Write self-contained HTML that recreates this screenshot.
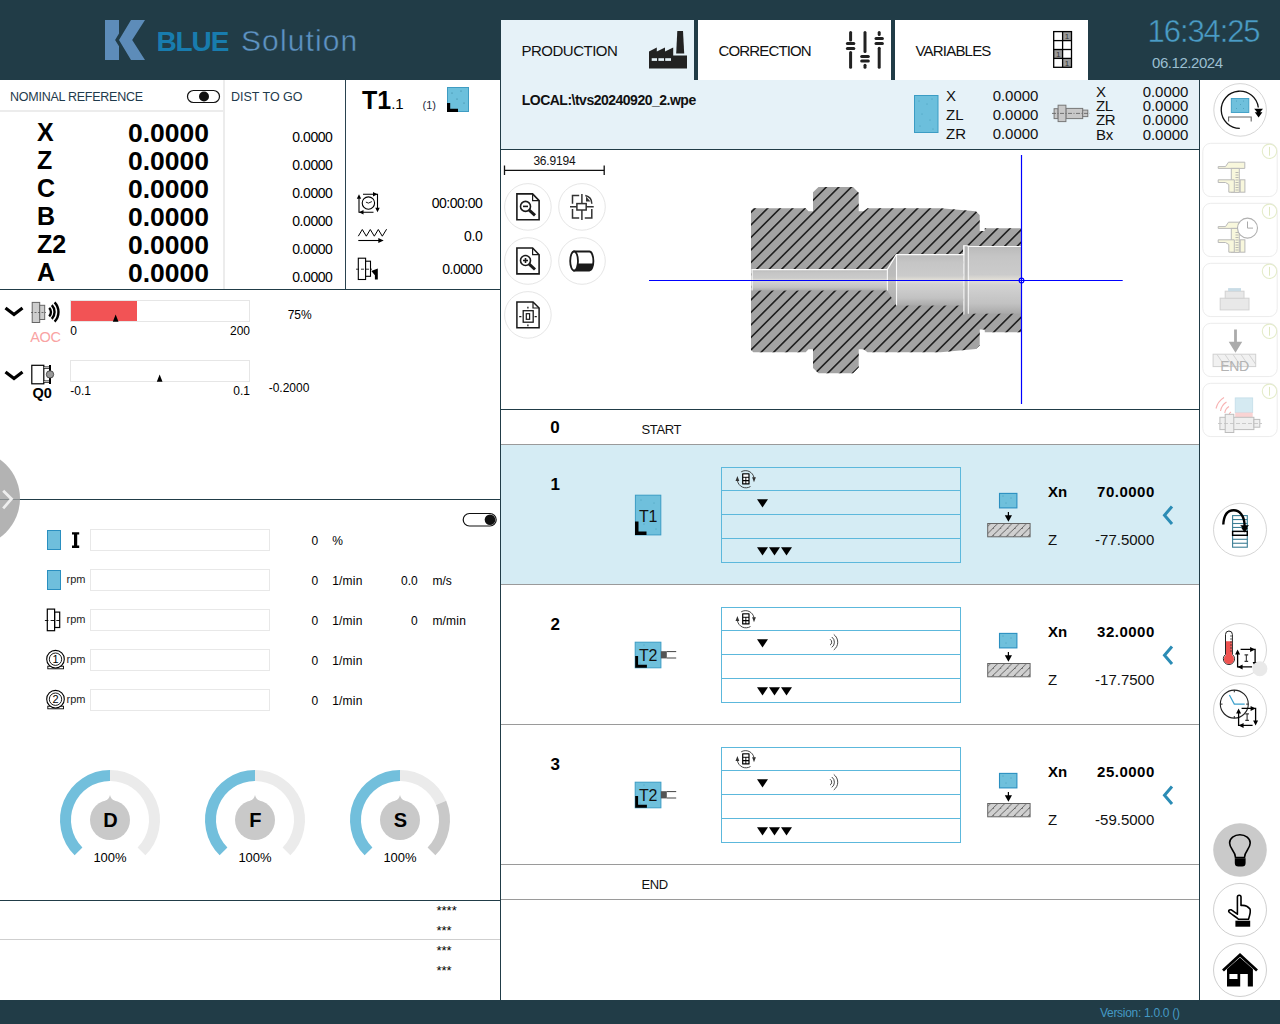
<!DOCTYPE html>
<html><head><meta charset="utf-8">
<style>
html,body{margin:0;padding:0}
body{width:1280px;height:1024px;position:relative;overflow:hidden;background:#fff;font-family:"Liberation Sans",sans-serif;color:#000}
.a{position:absolute}
.t{position:absolute;line-height:1;white-space:nowrap}
.b{font-weight:bold}
svg{position:absolute;overflow:visible}
</style></head><body>
<div class="a" style="left:0px;top:0px;width:1280px;height:80px;background:#213c47;"></div>
<svg style="left:0px;top:0px" width="160" height="80" viewBox="0 0 160 80"><path d="M105 20H119V33.5L115.1 40L119 46.3V60H105Z M131 20H145L132.2 40L145 60H131L119 40Z" fill="#5d8cb9"/></svg>
<div class="t b" style="top:28.00px;font-size:28px;left:156.50px;color:#187cae;letter-spacing:-1.1px;">BLUE</div>
<div class="t" style="top:26.00px;font-size:30px;left:241.00px;color:#5e93c4;letter-spacing:1.1px;-webkit-text-stroke:0.45px #213c47">Solution</div>
<div class="a" style="left:501px;top:20px;width:193px;height:60px;background:#e6f2f8;"></div>
<div class="a" style="left:698px;top:20px;width:193px;height:60px;background:#fff;"></div>
<div class="a" style="left:895px;top:20px;width:193px;height:60px;background:#fff;"></div>
<div class="t" style="top:43.00px;font-size:15px;left:521.50px;color:#111;letter-spacing:-0.5px;">PRODUCTION</div>
<div class="t" style="top:43.00px;font-size:15px;left:718.50px;color:#111;letter-spacing:-0.85px;">CORRECTION</div>
<div class="t" style="top:43.00px;font-size:15px;left:915.50px;color:#111;letter-spacing:-0.8px;">VARIABLES</div>
<svg style="left:640px;top:25px" width="60" height="50" viewBox="0 0 60 50"><g transform="translate(-640,-25)" fill="#222"><path d="M649 68.5V51.4L656.8 47.5V51.4L665 47.5V51.4L673.2 47.5V55.5H687V68.5Z"/><path d="M677.3 31H683L684.2 53.6H676.2Z"/><rect x="651.7" y="58.2" width="5.3" height="2.7" fill="#e6f2f8"/><rect x="658.4" y="58.2" width="5.6" height="2.7" fill="#e6f2f8"/><rect x="665.2" y="58.2" width="5.8" height="2.7" fill="#e6f2f8"/></g></svg>
<svg style="left:835px;top:25px" width="60" height="50" viewBox="0 0 60 50"><g transform="translate(-835,-25)" stroke="#222" stroke-width="3" stroke-linecap="round" fill="none"><line x1="850.6" y1="32.6" x2="850.6" y2="40"/><line x1="850.6" y1="52.6" x2="850.6" y2="67.2"/><line x1="847.4" y1="43.6" x2="853.8000000000001" y2="43.6"/><line x1="847.4" y1="48.5" x2="853.8000000000001" y2="48.5"/><line x1="865" y1="32.6" x2="865" y2="51.5"/><line x1="865" y1="65.2" x2="865" y2="67.2"/><line x1="861.7" y1="56.4" x2="868.3" y2="56.4"/><line x1="861.7" y1="61.1" x2="868.3" y2="61.1"/><line x1="879.2" y1="32.6" x2="879.2" y2="34.6"/><line x1="879.2" y1="48.2" x2="879.2" y2="67.2"/><line x1="876.0" y1="38.6" x2="882.4000000000001" y2="38.6"/><line x1="876.0" y1="43.4" x2="882.4000000000001" y2="43.4"/></g></svg>
<svg style="left:1040px;top:25px" width="40" height="50" viewBox="0 0 40 50"><g transform="translate(-1040,-25)"><rect x="1062.6" y="31.6" width="8.9" height="8.9" fill="#9a9a9a"/><text x="1067.05" y="39.2" font-size="8" text-anchor="middle" fill="#333" font-family="Liberation Sans">1</text><rect x="1053.7" y="49.5" width="8.9" height="8.9" fill="#9a9a9a"/><text x="1058.15" y="57.1" font-size="8" text-anchor="middle" fill="#333" font-family="Liberation Sans">1</text><rect x="1062.6" y="58.4" width="8.9" height="8.9" fill="#9a9a9a"/><text x="1067.05" y="66.0" font-size="8" text-anchor="middle" fill="#333" font-family="Liberation Sans">1</text><g stroke="#000" stroke-width="1.3" fill="none"><rect x="1053.7" y="31.6" width="17.799999999999955" height="35.699999999999996"/><line x1="1062.6" y1="31.6" x2="1062.6" y2="67.3"/><line x1="1053.7" y1="40.6" x2="1071.5" y2="40.6"/><line x1="1053.7" y1="49.5" x2="1071.5" y2="49.5"/><line x1="1053.7" y1="58.4" x2="1071.5" y2="58.4"/></g></g></svg>
<div class="t" style="top:16.00px;font-size:31px;left:1147.60px;color:#4a9cc6;letter-spacing:-1.1px;-webkit-text-stroke:0.45px #213c47">16:34:25</div>
<div class="t" style="top:55.00px;font-size:15px;left:1152.00px;color:#9bbfd1;letter-spacing:-0.45px;">06.12.2024</div>
<div class="a" style="left:0px;top:1000px;width:1280px;height:24px;background:#213c47;"></div>
<div class="t" style="top:1007.00px;font-size:12px;left:1100.00px;color:#4599c4;letter-spacing:-0.3px;">Version: 1.0.0 ()</div>
<div class="t" style="top:91.00px;font-size:12.5px;left:10.00px;color:#1e3a4c;letter-spacing:-0.25px;">NOMINAL REFERENCE</div>
<svg style="left:186px;top:89px" width="36" height="16" viewBox="0 0 36 16"><rect x="1.5" y="1.5" width="32" height="12" rx="6" fill="#fff" stroke="#111" stroke-width="1.2"/><circle cx="18" cy="7.5" r="5" fill="#111"/></svg>
<div class="a" style="left:0px;top:110px;width:223px;height:2px;background:#ececec;"></div>
<div class="a" style="left:223px;top:80px;width:2px;height:209px;background:#ececec;"></div>
<div class="t" style="top:91.00px;font-size:12.5px;left:231.00px;color:#1e3a4c;">DIST TO GO</div>
<div class="a" style="left:345px;top:80px;width:1px;height:209px;background:#2a4350;"></div>
<div class="a" style="left:0px;top:289px;width:500px;height:1px;background:#213c47;"></div>
<div class="t b" style="top:120.00px;font-size:25px;left:37.00px;">X</div>
<div class="t b" style="top:121.00px;font-size:25px;left:9.20px;width:200px;text-align:right;transform:scaleX(1.06);transform-origin:100% 50%">0.0000</div>
<div class="t" style="top:130.00px;font-size:14px;left:132.40px;width:200px;text-align:right;letter-spacing:-0.45px;">0.0000</div>
<div class="t b" style="top:148.00px;font-size:25px;left:37.00px;">Z</div>
<div class="t b" style="top:149.00px;font-size:25px;left:9.20px;width:200px;text-align:right;transform:scaleX(1.06);transform-origin:100% 50%">0.0000</div>
<div class="t" style="top:158.00px;font-size:14px;left:132.40px;width:200px;text-align:right;letter-spacing:-0.45px;">0.0000</div>
<div class="t b" style="top:176.00px;font-size:25px;left:37.00px;">C</div>
<div class="t b" style="top:177.00px;font-size:25px;left:9.20px;width:200px;text-align:right;transform:scaleX(1.06);transform-origin:100% 50%">0.0000</div>
<div class="t" style="top:186.00px;font-size:14px;left:132.40px;width:200px;text-align:right;letter-spacing:-0.45px;">0.0000</div>
<div class="t b" style="top:204.00px;font-size:25px;left:37.00px;">B</div>
<div class="t b" style="top:205.00px;font-size:25px;left:9.20px;width:200px;text-align:right;transform:scaleX(1.06);transform-origin:100% 50%">0.0000</div>
<div class="t" style="top:214.00px;font-size:14px;left:132.40px;width:200px;text-align:right;letter-spacing:-0.45px;">0.0000</div>
<div class="t b" style="top:232.00px;font-size:25px;left:37.00px;">Z2</div>
<div class="t b" style="top:233.00px;font-size:25px;left:9.20px;width:200px;text-align:right;transform:scaleX(1.06);transform-origin:100% 50%">0.0000</div>
<div class="t" style="top:242.00px;font-size:14px;left:132.40px;width:200px;text-align:right;letter-spacing:-0.45px;">0.0000</div>
<div class="t b" style="top:260.00px;font-size:25px;left:37.00px;">A</div>
<div class="t b" style="top:261.00px;font-size:25px;left:9.20px;width:200px;text-align:right;transform:scaleX(1.06);transform-origin:100% 50%">0.0000</div>
<div class="t" style="top:270.00px;font-size:14px;left:132.40px;width:200px;text-align:right;letter-spacing:-0.45px;">0.0000</div>
<div class="t b" style="top:88.00px;font-size:25px;left:362.00px;">T1<span style="font-size:15px;font-weight:normal">.1</span></div>
<div class="t" style="top:100.00px;font-size:11px;left:422.50px;color:#1e2a40;">(1)</div>
<svg style="left:447px;top:87px" width="22" height="25" viewBox="0 0 22 25"><rect x="0.5" y="0.5" width="21" height="24" fill="#6cc0dc" stroke="#3f9cc2"/><g fill="#2a6f8a"><circle cx="5" cy="6" r=".5"/><circle cx="14" cy="4" r=".5"/><circle cx="10" cy="12" r=".5"/><circle cx="17" cy="16" r=".5"/></g><path d="M0 16H3.2V21.8H11V25H0Z" fill="#000"/></svg>
<svg style="left:356px;top:192px" width="24" height="24" viewBox="0 0 24 24"><path d="M3 6.3V20.3H17.5M7 2.3H21.5V16.3" fill="none" stroke="#000" stroke-width="1.1"/><path d="M0.7999999999999998 6.8L3 2.3L5.2 6.8Z M17.0 0.09999999999999964L21.5 2.3L17.0 4.5Z M23.7 15.8L21.5 20.3L19.3 15.8Z M7.5 22.5L3 20.3L7.5 18.1Z" fill="#000"/><circle cx="12.4" cy="11.1" r="6.2" fill="#fff" stroke="#000" stroke-width="1.1"/><path d="M12.4 11.1L15.9 9.6M12.4 11.1L9.9 10.1" stroke="#000" stroke-width="0.9"/></svg>
<div class="t" style="top:196.00px;font-size:14px;left:282.30px;width:200px;text-align:right;letter-spacing:-0.5px;">00:00:00</div>
<svg style="left:357px;top:228px" width="32" height="16" viewBox="0 0 32 16"><path d="M1.3 8.2L5.3 1.5L9.3 8.2L13.3 1.5L17.3 8.2L21.3 1.5L25.3 8.2L29.6 1.2" fill="none" stroke="#000" stroke-width="1"/><path d="M1.3 12.5H23" stroke="#000" stroke-width="1.1"/><path d="M26.7 12.5L21.3 10V15Z" fill="#000"/></svg>
<div class="t" style="top:229.00px;font-size:14px;left:282.30px;width:200px;text-align:right;letter-spacing:-0.4px;">0.0</div>
<svg style="left:355px;top:257px" width="26" height="25" viewBox="0 0 26 25"><rect x="3.3" y="1.2" width="7.3" height="21.3" fill="#fff" stroke="#000" stroke-width="1.1"/><rect x="10.6" y="4.2" width="4.9" height="15.1" fill="#fff" stroke="#000" stroke-width="1.1"/><path d="M1 12.2H17" stroke="#000" stroke-width="0.8" stroke-dasharray="3 2"/><path d="M16.3 14L22.8 11.5V22.5H19.9V18.3Z" fill="#000"/></svg>
<div class="t" style="top:262.00px;font-size:14px;left:282.30px;width:200px;text-align:right;letter-spacing:-0.45px;">0.0000</div>
<svg style="left:4px;top:306px" width="22" height="12" viewBox="0 0 22 12"><path d="M1.5 2L10 8.5L18.5 2" fill="none" stroke="#000" stroke-width="3.2" stroke-linejoin="miter"/></svg>
<svg style="left:30px;top:300px" width="34" height="25" viewBox="0 0 34 25"><rect x="2.2" y="2.4" width="7.5" height="20.1" fill="#cdcdcd" stroke="#666" stroke-width="1"/><rect x="9.7" y="5.3" width="5" height="14.2" fill="#cdcdcd" stroke="#666" stroke-width="1"/><path d="M1 12.5H16" stroke="#555" stroke-width="0.8" stroke-dasharray="2 1.5"/><g fill="none" stroke="#000" stroke-width="2.4"><path d="M19.2 7.8A6 6 0 0 1 19.2 16.3"/><path d="M21.8 5.1A10 10 0 0 1 21.8 18.9"/><path d="M24.6 2.3A14 14 0 0 1 24.6 21.6"/></g></svg>
<div class="t" style="top:330.00px;font-size:14.5px;left:30.30px;color:#f9a3a3;letter-spacing:-0.4px;">AOC</div>
<div class="a" style="left:70px;top:300px;width:180px;height:22px;background:#fff;box-sizing:border-box;border:1px solid #e6e6e6"></div>
<div class="a" style="left:71px;top:301px;width:65.5px;height:20px;background:#f25355;"></div>
<svg style="left:112px;top:314px" width="8" height="8" viewBox="0 0 8 8"><path d="M0.8 7.7L3.65 0.5L6.5 7.7Z" fill="#000"/></svg>
<div class="t" style="top:325.00px;font-size:12px;left:70.30px;">0</div>
<div class="t" style="top:325.00px;font-size:12px;left:50.00px;width:200px;text-align:right;">200</div>
<div class="t" style="top:309.00px;font-size:12px;left:287.70px;">75%</div>
<svg style="left:4px;top:370px" width="22" height="12" viewBox="0 0 22 12"><path d="M1.5 2L10 8.5L18.5 2" fill="none" stroke="#000" stroke-width="3.2" stroke-linejoin="miter"/></svg>
<svg style="left:30px;top:363px" width="26" height="22" viewBox="0 0 26 22"><rect x="1.8" y="2.3" width="12" height="18.5" fill="#fff" stroke="#000" stroke-width="1.2"/><path d="M13.8 4.6H20M13.8 18.6H20" stroke="#000" stroke-width="2.4"/><path d="M13.8 4.6H20M13.8 18.6H20" stroke="#fff" stroke-width="0.8"/><path d="M20 2V21" stroke="#000" stroke-width="2"/><circle cx="20" cy="11.4" r="3.7" fill="#999" stroke="#333" stroke-width="0.8"/></svg>
<div class="t b" style="top:386.00px;font-size:14.5px;left:32.50px;">Q0</div>
<div class="a" style="left:70px;top:360px;width:180px;height:22px;background:#fff;box-sizing:border-box;border:1px solid #e6e6e6"></div>
<svg style="left:156px;top:374px" width="8" height="8" viewBox="0 0 8 8"><path d="M0.8 7.7L3.65 0.5L6.5 7.7Z" fill="#000"/></svg>
<div class="t" style="top:385.00px;font-size:12px;left:70.30px;">-0.1</div>
<div class="t" style="top:385.00px;font-size:12px;left:50.00px;width:200px;text-align:right;">0.1</div>
<div class="t" style="top:382.00px;font-size:12px;left:268.70px;">-0.2000</div>
<div class="a" style="left:0px;top:499px;width:500px;height:1px;background:#213c47;"></div>
<svg style="left:0px;top:440px" width="40" height="120" viewBox="0 0 40 120"><circle cx="-28" cy="58.5" r="48" fill="#a0a0a0" fill-opacity="0.8"/><path d="M3.2 50.7L11.5 58.9L3.2 68.4" fill="none" stroke="#eee" stroke-width="2.8"/></svg>
<svg style="left:462px;top:512px" width="36" height="16" viewBox="0 0 36 16"><rect x="1.2" y="1.5" width="33" height="12.5" rx="6.2" fill="#fff" stroke="#111" stroke-width="1.2"/><circle cx="28" cy="7.7" r="5.3" fill="#111"/></svg>
<div class="a" style="left:90px;top:529px;width:180px;height:22px;background:#fff;box-sizing:border-box;border:1px solid #e8e8e8"></div>
<div class="t" style="top:535.00px;font-size:12px;left:118.10px;width:200px;text-align:right;">0</div>
<div class="a" style="left:90px;top:569px;width:180px;height:22px;background:#fff;box-sizing:border-box;border:1px solid #e8e8e8"></div>
<div class="t" style="top:575.00px;font-size:12px;left:118.10px;width:200px;text-align:right;">0</div>
<div class="a" style="left:90px;top:609px;width:180px;height:22px;background:#fff;box-sizing:border-box;border:1px solid #e8e8e8"></div>
<div class="t" style="top:615.00px;font-size:12px;left:118.10px;width:200px;text-align:right;">0</div>
<div class="a" style="left:90px;top:649px;width:180px;height:22px;background:#fff;box-sizing:border-box;border:1px solid #e8e8e8"></div>
<div class="t" style="top:655.00px;font-size:12px;left:118.10px;width:200px;text-align:right;">0</div>
<div class="a" style="left:90px;top:689px;width:180px;height:22px;background:#fff;box-sizing:border-box;border:1px solid #e8e8e8"></div>
<div class="t" style="top:695.00px;font-size:12px;left:118.10px;width:200px;text-align:right;">0</div>
<svg style="left:46px;top:529px" width="16" height="22" viewBox="0 0 16 22"><rect x="1.5" y="1.5" width="13" height="19" fill="#6fbfdc" stroke="#2a8fc0" stroke-width="1"/></svg>
<svg style="left:70px;top:531px" width="12" height="19" viewBox="0 0 12 19"><path d="M2 1.2H9.2V3.6H7.2V14.6H9.2V17H2V14.6H4V3.6H2Z" fill="#000"/></svg>
<svg style="left:46px;top:569px" width="16" height="22" viewBox="0 0 16 22"><rect x="1.5" y="1.5" width="13" height="19" fill="#6fbfdc" stroke="#2a8fc0" stroke-width="1"/></svg>
<div class="t" style="top:574.00px;font-size:11px;left:66.60px;color:#222;">rpm</div>
<svg style="left:44px;top:608px" width="20" height="24" viewBox="0 0 20 24"><rect x="3.3" y="1.1" width="7.3" height="21.6" fill="none" stroke="#000" stroke-width="1.2"/><rect x="10.6" y="4.1" width="5.1" height="15.4" fill="none" stroke="#000" stroke-width="1.2"/><path d="M0.9 12.5H17.7" stroke="#000" stroke-width="0.9" stroke-dasharray="3.5 2.2"/></svg>
<div class="t" style="top:614.00px;font-size:11px;left:66.60px;color:#222;">rpm</div>
<svg style="left:44px;top:647px" width="24" height="24" viewBox="0 0 24 24"><g transform="translate(-44,-647)"><rect x="47.8" y="666.2" width="15.7" height="2.6" fill="#fff" stroke="#000" stroke-width="0.9"/><circle cx="55.5" cy="659.2" r="8.8" fill="#fff" stroke="#000" stroke-width="1.1"/><circle cx="55.5" cy="659.2" r="6.2" fill="#fff" stroke="#000" stroke-width="0.9"/><text x="55.5" y="663.2" font-size="11" text-anchor="middle" font-family="Liberation Sans" fill="#000">1</text></g></svg>
<div class="t" style="top:654.00px;font-size:11px;left:66.60px;color:#222;">rpm</div>
<svg style="left:44px;top:687px" width="24" height="24" viewBox="0 0 24 24"><g transform="translate(-44,-687)"><rect x="47.8" y="706.2" width="15.7" height="2.6" fill="#fff" stroke="#000" stroke-width="0.9"/><circle cx="55.5" cy="699.2" r="8.8" fill="#fff" stroke="#000" stroke-width="1.1"/><circle cx="55.5" cy="699.2" r="6.2" fill="#fff" stroke="#000" stroke-width="0.9"/><text x="55.5" y="703.2" font-size="11" text-anchor="middle" font-family="Liberation Sans" fill="#000">2</text></g></svg>
<div class="t" style="top:694.00px;font-size:11px;left:66.60px;color:#222;">rpm</div>
<div class="t" style="top:535.00px;font-size:12px;left:332.20px;">%</div>
<div class="t" style="top:575.00px;font-size:12px;left:332.20px;letter-spacing:0.2px;">1/min</div>
<div class="t" style="top:615.00px;font-size:12px;left:332.20px;letter-spacing:0.2px;">1/min</div>
<div class="t" style="top:655.00px;font-size:12px;left:332.20px;letter-spacing:0.2px;">1/min</div>
<div class="t" style="top:695.00px;font-size:12px;left:332.20px;letter-spacing:0.2px;">1/min</div>
<div class="t" style="top:575.00px;font-size:12px;left:217.80px;width:200px;text-align:right;">0.0</div>
<div class="t" style="top:575.00px;font-size:12px;left:432.40px;">m/s</div>
<div class="t" style="top:615.00px;font-size:12px;left:217.80px;width:200px;text-align:right;">0</div>
<div class="t" style="top:615.00px;font-size:12px;left:432.40px;letter-spacing:0.2px;">m/min</div>
<svg style="left:0;top:0" width="500" height="1000" viewBox="0 0 500 1000"><path d="M78.53 851.47A44.5 44.5 0 0 1 110.00 775.50" fill="none" stroke="#72bfdc" stroke-width="11"/><path d="M110.00 775.50A44.5 44.5 0 0 1 141.47 851.47" fill="none" stroke="#ebebeb" stroke-width="11"/><circle cx="110" cy="820" r="20" fill="#c9c9c9"/><path d="M110 795Q111 799.5 115 801H105Q109 799.5 110 795Z" fill="#c9c9c9"/></svg>
<div class="t b" style="top:810.00px;font-size:20px;left:90.40px;width:40px;text-align:center;">D</div>
<div class="t" style="top:851.00px;font-size:13px;left:80.00px;width:60px;text-align:center;">100%</div>
<svg style="left:0;top:0" width="500" height="1000" viewBox="0 0 500 1000"><path d="M223.53 851.47A44.5 44.5 0 0 1 255.00 775.50" fill="none" stroke="#72bfdc" stroke-width="11"/><path d="M255.00 775.50A44.5 44.5 0 0 1 286.47 851.47" fill="none" stroke="#ebebeb" stroke-width="11"/><circle cx="255" cy="820" r="20" fill="#c9c9c9"/><path d="M255 795Q256 799.5 260 801H250Q254 799.5 255 795Z" fill="#c9c9c9"/></svg>
<div class="t b" style="top:810.00px;font-size:20px;left:235.40px;width:40px;text-align:center;">F</div>
<div class="t" style="top:851.00px;font-size:13px;left:225.00px;width:60px;text-align:center;">100%</div>
<svg style="left:0;top:0" width="500" height="1000" viewBox="0 0 500 1000"><path d="M368.53 851.47A44.5 44.5 0 0 1 400.00 775.50" fill="none" stroke="#72bfdc" stroke-width="11"/><path d="M400.00 775.50A44.5 44.5 0 0 1 441.11 802.97" fill="none" stroke="#ebebeb" stroke-width="11"/><path d="M441.11 802.97A44.5 44.5 0 0 1 431.47 851.47" fill="none" stroke="#c9c9c9" stroke-width="11"/><circle cx="400" cy="820" r="20" fill="#c9c9c9"/><path d="M400 795Q401 799.5 405 801H395Q399 799.5 400 795Z" fill="#c9c9c9"/></svg>
<div class="t b" style="top:810.00px;font-size:20px;left:380.40px;width:40px;text-align:center;">S</div>
<div class="t" style="top:851.00px;font-size:13px;left:370.00px;width:60px;text-align:center;">100%</div>
<div class="a" style="left:0px;top:900px;width:500px;height:1px;background:#213c47;"></div>
<div class="a" style="left:0px;top:939px;width:500px;height:1px;background:#cfcfcf;"></div>
<div class="t" style="top:904.00px;font-size:13px;left:436.50px;">****</div>
<div class="t" style="top:924.00px;font-size:13px;left:436.50px;">***</div>
<div class="t" style="top:944.00px;font-size:13px;left:436.50px;">***</div>
<div class="t" style="top:964.00px;font-size:13px;left:436.50px;">***</div>
<div class="a" style="left:501px;top:80px;width:698px;height:69px;background:#e6f2f8;"></div>
<div class="a" style="left:500px;top:149px;width:699px;height:1px;background:#213c47;"></div>
<div class="t b" style="top:93.00px;font-size:14px;left:521.70px;color:#111;letter-spacing:-0.5px;">LOCAL:\tvs20240920_2.wpe</div>
<svg style="left:913px;top:94px" width="27" height="40" viewBox="0 0 27 40"><rect x="1.5" y="1.5" width="23.5" height="37" fill="#6cbfdc" stroke="#3b9cc4" stroke-width="1"/><g fill="#2a7f9f"><circle cx="6" cy="7" r=".45"/><circle cx="14" cy="10" r=".45"/><circle cx="19" cy="5" r=".45"/><circle cx="9" cy="20" r=".45"/><circle cx="17" cy="26" r=".45"/><circle cx="7" cy="32" r=".45"/><circle cx="20" cy="35" r=".45"/></g></svg>
<div class="t" style="top:88.00px;font-size:15px;left:946.00px;color:#111;">X</div>
<div class="t" style="top:88.00px;font-size:15px;left:838.30px;width:200px;text-align:right;color:#111;letter-spacing:-0.05px;">0.0000</div>
<div class="t" style="top:107.00px;font-size:15px;left:946.00px;color:#111;">ZL</div>
<div class="t" style="top:107.00px;font-size:15px;left:838.30px;width:200px;text-align:right;color:#111;letter-spacing:-0.05px;">0.0000</div>
<div class="t" style="top:126.00px;font-size:15px;left:946.00px;color:#111;">ZR</div>
<div class="t" style="top:126.00px;font-size:15px;left:838.30px;width:200px;text-align:right;color:#111;letter-spacing:-0.05px;">0.0000</div>
<svg style="left:1050px;top:103px" width="42" height="21" viewBox="0 0 42 21"><g transform="translate(-1050,-103)" fill="#c8c8c8" stroke="#777" stroke-width="1"><rect x="1054.1" y="108.7" width="4" height="9.9"/><rect x="1065.9" y="108.4" width="16.8" height="10.2"/><rect x="1082.7" y="110.1" width="5.1" height="6.5"/><rect x="1058.1" y="105.2" width="7.8" height="16.4"/><path d="M1052 113.4H1089.8" fill="none" stroke="#666" stroke-width="0.9" stroke-dasharray="4 1.5 1 1.5"/></g></svg>
<div class="t" style="top:84.00px;font-size:15px;left:1096.00px;color:#111;letter-spacing:-0.3px;">X</div>
<div class="t" style="top:84.00px;font-size:15px;left:988.30px;width:200px;text-align:right;color:#111;letter-spacing:-0.05px;">0.0000</div>
<div class="t" style="top:98.00px;font-size:15px;left:1096.00px;color:#111;letter-spacing:-0.3px;">ZL</div>
<div class="t" style="top:98.00px;font-size:15px;left:988.30px;width:200px;text-align:right;color:#111;letter-spacing:-0.05px;">0.0000</div>
<div class="t" style="top:112.00px;font-size:15px;left:1096.00px;color:#111;letter-spacing:-0.3px;">ZR</div>
<div class="t" style="top:112.00px;font-size:15px;left:988.30px;width:200px;text-align:right;color:#111;letter-spacing:-0.05px;">0.0000</div>
<div class="t" style="top:127.00px;font-size:15px;left:1096.00px;color:#111;letter-spacing:-0.3px;">Bx</div>
<div class="t" style="top:127.00px;font-size:15px;left:988.30px;width:200px;text-align:right;color:#111;letter-spacing:-0.05px;">0.0000</div>
<div class="t" style="top:155.00px;font-size:12px;left:533.40px;color:#111;letter-spacing:-0.2px;">36.9194</div>
<svg style="left:500px;top:160px" width="110" height="20" viewBox="0 0 110 20"><g transform="translate(-500,-160)" stroke="#111" stroke-width="1.3"><path d="M504.5 170.3H604.2"/><path d="M504.5 165.5V175M604.2 165.5V175"/></g></svg>
<svg style="left:0;top:0" width="1280" height="1024" viewBox="0 0 1280 1024"><circle cx="527.9" cy="206.9" r="23.3" fill="#fff" stroke="#e6e6e6" stroke-width="1"/><circle cx="582" cy="206.9" r="23.3" fill="#fff" stroke="#e6e6e6" stroke-width="1"/><circle cx="527.9" cy="261" r="23.3" fill="#fff" stroke="#e6e6e6" stroke-width="1"/><circle cx="582" cy="261" r="23.3" fill="#fff" stroke="#e6e6e6" stroke-width="1"/><circle cx="527.9" cy="314.9" r="23.3" fill="#fff" stroke="#e6e6e6" stroke-width="1"/><g stroke="#1a1a1a" stroke-width="1.6" fill="none"><path d="M516.9 193.9H532.6L539.1 200.6V219.8H516.9Z"/><path d="M532.6 193.9V200.6H539.1" stroke-width="1.2"/><circle cx="525.5" cy="206.4" r="5"/><path d="M529.2 210.1L535 215.4" stroke-width="3"/><path d="M523 206.4H528"/><path d="M516.9 248.0H532.6L539.1 254.7V273.90000000000003H516.9Z"/><path d="M532.6 248.0V254.7H539.1" stroke-width="1.2"/><circle cx="525.5" cy="260.5" r="5"/><path d="M529.2 264.2L535 269.5" stroke-width="3"/><path d="M523 260.5H528"/><path d="M525.5 258.0V263.0"/></g><g stroke="#333" stroke-width="1.5" fill="none"><path d="M579.2 195.6H572.5V203.8M572.5 208.9V218H579.2M584.8 218H591.8V208.9"/><path d="M585.3 195.6Q591.8 197 591.8 203.8" /><rect x="576.9" y="203.6" width="9.3" height="6.4"/><path d="M581.9 194V203.6M581.9 210V220M570 206.8H576.9M586.2 206.8H593.7"/></g><path d="M586 196.5L590.5 201.5H586Z" fill="#333"/><path d="M574.1 251.5H589.4A4 9.5 0 0 1 589.4 270.5H574.1Z" fill="#fff" stroke="#1a1a1a" stroke-width="1.8"/><path d="M574.1 263.4H593.2Q593 268 589.4 270.5H574.1Z" fill="#1a1a1a"/><ellipse cx="574.1" cy="261" rx="3.9" ry="9.5" fill="#fff" stroke="#1a1a1a" stroke-width="1.8"/><g stroke="#1a1a1a" fill="none"><path d="M516.9 301.9H533L539.1 308V327.8H516.9Z" stroke-width="1.5"/><path d="M533 301.9V308H539.1" stroke-width="1.2"/><rect x="523.2" y="310.7" width="10" height="11.5" stroke-width="1.3"/><rect x="526.3" y="313.7" width="3.3" height="5.6" stroke-width="1.2"/><path d="M527.9 306.8V308.6M527.9 324.4V326.2M519.2 316.6H521.4M534.6 316.6H536.8" stroke-width="1.3"/></g></svg>
<svg style="left:0;top:0" width="1280" height="1024" viewBox="0 0 1280 1024"><defs><linearGradient id="g1" gradientUnits="userSpaceOnUse" x1="0" y1="269.4" x2="0" y2="290.6"><stop offset="0" stop-color="#bababa"/><stop offset="0.15" stop-color="#c5c5c5"/><stop offset="0.42" stop-color="#cbcbcb"/><stop offset="0.5" stop-color="#e3e0d7"/><stop offset="0.58" stop-color="#d2d2d2"/><stop offset="0.85" stop-color="#c2c2c2"/><stop offset="1" stop-color="#a9a9a9"/></linearGradient><linearGradient id="g2" gradientUnits="userSpaceOnUse" x1="0" y1="254.4" x2="0" y2="305.6"><stop offset="0" stop-color="#bababa"/><stop offset="0.15" stop-color="#c5c5c5"/><stop offset="0.42" stop-color="#cbcbcb"/><stop offset="0.5" stop-color="#e3e0d7"/><stop offset="0.58" stop-color="#d2d2d2"/><stop offset="0.85" stop-color="#c2c2c2"/><stop offset="1" stop-color="#a9a9a9"/></linearGradient><linearGradient id="g3" gradientUnits="userSpaceOnUse" x1="0" y1="245.6" x2="0" y2="314.4"><stop offset="0" stop-color="#b0b0b0"/><stop offset="0.15" stop-color="#b8b8b8"/><stop offset="0.42" stop-color="#bcbcbc"/><stop offset="0.5" stop-color="#c8c6c0"/><stop offset="0.58" stop-color="#bcbcbc"/><stop offset="0.85" stop-color="#b2b2b2"/><stop offset="1" stop-color="#a2a2a2"/></linearGradient><linearGradient id="g4" gradientUnits="userSpaceOnUse" x1="0" y1="246.3" x2="0" y2="313.7"><stop offset="0" stop-color="#bababa"/><stop offset="0.15" stop-color="#c5c5c5"/><stop offset="0.42" stop-color="#cbcbcb"/><stop offset="0.5" stop-color="#e3e0d7"/><stop offset="0.58" stop-color="#d2d2d2"/><stop offset="0.85" stop-color="#c2c2c2"/><stop offset="1" stop-color="#a9a9a9"/></linearGradient><linearGradient id="g5" gradientUnits="userSpaceOnUse" x1="0" y1="254.4" x2="0" y2="305.6"><stop offset="0" stop-color="#b0b0b0"/><stop offset="0.15" stop-color="#b8b8b8"/><stop offset="0.42" stop-color="#bcbcbc"/><stop offset="0.5" stop-color="#c8c6c0"/><stop offset="0.58" stop-color="#bcbcbc"/><stop offset="0.85" stop-color="#b2b2b2"/><stop offset="1" stop-color="#a2a2a2"/></linearGradient></defs><clipPath id="pc"><path d="M751.0 210.5L753.3 208.2L805.7 208.2L808.5 211.2L813.0 211.2L813.0 192.3L818.5 187.1L853.0 187.1L858.7 192.8L858.7 211.2L863.5 211.2L867.5 208.2L940.6 208.2L975.8 211.2L979.7 214.9L979.7 230.9L984.8 230.9L984.8 228.2L1021.2 228.2L1021.2 332.2L984.8 332.2L984.8 329.5L979.7 329.5L979.7 345.5L975.8 349.1L940.6 352.2L867.5 352.2L863.5 349.2L858.7 349.2L858.7 367.6L853.0 373.3L818.5 373.3L813.0 368.1L813.0 349.2L808.5 349.2L805.7 352.2L753.3 352.2L751.0 349.9Z"/></clipPath><path d="M751.0 210.5L753.3 208.2L805.7 208.2L808.5 211.2L813.0 211.2L813.0 192.3L818.5 187.1L853.0 187.1L858.7 192.8L858.7 211.2L863.5 211.2L867.5 208.2L940.6 208.2L975.8 211.2L979.7 214.9L979.7 230.9L984.8 230.9L984.8 228.2L1021.2 228.2L1021.2 332.2L984.8 332.2L984.8 329.5L979.7 329.5L979.7 345.5L975.8 349.1L940.6 352.2L867.5 352.2L863.5 349.2L858.7 349.2L858.7 367.6L853.0 373.3L818.5 373.3L813.0 368.1L813.0 349.2L808.5 349.2L805.7 352.2L753.3 352.2L751.0 349.9Z" fill="#a3a3a3"/><path clip-path="url(#pc)" d="M745.90 180L545.90 380M758.40 180L558.40 380M770.90 180L570.90 380M783.40 180L583.40 380M795.90 180L595.90 380M808.40 180L608.40 380M820.90 180L620.90 380M833.40 180L633.40 380M845.90 180L645.90 380M858.40 180L658.40 380M870.90 180L670.90 380M883.40 180L683.40 380M895.90 180L695.90 380M908.40 180L708.40 380M920.90 180L720.90 380M933.40 180L733.40 380M945.90 180L745.90 380M958.40 180L758.40 380M970.90 180L770.90 380M983.40 180L783.40 380M995.90 180L795.90 380M1008.40 180L808.40 380M1020.90 180L820.90 380M1033.40 180L833.40 380M1045.90 180L845.90 380M1058.40 180L858.40 380M1070.90 180L870.90 380M1083.40 180L883.40 380M1095.90 180L895.90 380M1108.40 180L908.40 380M1120.90 180L920.90 380M1133.40 180L933.40 380M1145.90 180L945.90 380M1158.40 180L958.40 380M1170.90 180L970.90 380M1183.40 180L983.40 380M1195.90 180L995.90 380M1208.40 180L1008.40 380M1220.90 180L1020.90 380M1233.40 180L1033.40 380" stroke="#1f1f1f" stroke-width="1.6"/><rect x="751.5" y="269.4" width="135.75" height="21.2" fill="url(#g1)"/><path d="M887.25 269.4L896.25 254.4V305.6L887.25 290.6Z" fill="url(#g5)"/><rect x="896.25" y="254.4" width="67.5" height="51.2" fill="url(#g2)"/><rect x="963.75" y="245.6" width="4.35" height="68.8" fill="url(#g3)"/><rect x="968.1" y="246.3" width="53.1" height="67.4" fill="url(#g4)"/><path d="M751.5 269.6H887.25L896.25 254.6H963.75V245.8H968.1V246.5H1021.2" fill="none" stroke="#fafafa" stroke-width="1.1"/><path d="M752.1 269.4V290.6M887.4 269.4V290.6M896.5 254.4V305.6M963.9 245.6V314.4M968.3 246.3V313.7" stroke="#fafafa" stroke-width="1.1"/><path d="M649 280.5H1122.7M1021.5 155V404" stroke="#0000ff" stroke-width="1.2"/><circle cx="1021.5" cy="280.5" r="2.4" fill="none" stroke="#0000ff" stroke-width="1.1"/></svg>
<div class="a" style="left:500px;top:409px;width:699px;height:1px;background:#213c47;"></div>
<div class="a" style="left:501px;top:444px;width:698px;height:1px;background:#9a9a9a;"></div>
<div class="t b" style="top:419.00px;font-size:17px;left:550.20px;">0</div>
<div class="t" style="top:423.00px;font-size:13px;left:641.50px;color:#111;letter-spacing:-0.35px;">START</div>
<div class="a" style="left:501px;top:445px;width:698px;height:139px;background:#d5ecf4;"></div>
<div class="a" style="left:501px;top:584px;width:698px;height:1px;background:#9a9a9a;"></div>
<div class="a" style="left:501px;top:724px;width:698px;height:1px;background:#9a9a9a;"></div>
<div class="a" style="left:501px;top:864px;width:698px;height:1px;background:#9a9a9a;"></div>
<div class="a" style="left:501px;top:899px;width:698px;height:1px;background:#9a9a9a;"></div>
<div class="t" style="top:878.00px;font-size:13px;left:641.50px;color:#111;letter-spacing:-0.35px;">END</div>
<div class="t b" style="top:476.00px;font-size:17px;left:550.40px;">1</div>
<svg style="left:634px;top:494px" width="28" height="42" viewBox="0 0 28 42"><rect x="1.4" y="1.2" width="25.4" height="39.7" fill="#6fc0dc" stroke="#3b9cc4" stroke-width="1"/><g fill="#2a7f9f"><circle cx="7" cy="6" r=".45"/><circle cx="20" cy="9" r=".45"/><circle cx="10" cy="30" r=".45"/><circle cx="22" cy="35" r=".45"/></g><path d="M1 27.5H4.5V37.5H12.5V41H1Z" fill="#000"/></svg>
<div class="t" style="top:509.00px;font-size:16px;left:633.00px;width:30px;text-align:center;color:#111;letter-spacing:-0.4px;">T1</div>
<svg style="left:721px;top:467px" width="241" height="97" viewBox="0 0 241 97"><rect x="0.5" y="0.5" width="239" height="95" fill="#d5ecf4" stroke="#5cb8dc" stroke-width="1"/><path d="M0.5 23.5H239.5" stroke="#5cb8dc" stroke-width="1"/><path d="M0.5 47.5H239.5" stroke="#5cb8dc" stroke-width="1"/><path d="M0.5 71.5H239.5" stroke="#5cb8dc" stroke-width="1"/><g transform="translate(24.7,12)"><rect x="-3.6" y="-5.7" width="7.5" height="11.3" rx="0.6" fill="#000"/><rect x="-2.4" y="-4.6" width="5.1" height="2.4" fill="#fff"/><path d="M-2.4 -1.2H-0.3V0.9H-2.4ZM0.6 -1.2H2.7V0.9H0.6ZM-2.4 2.2H-0.3V4.3H-2.4ZM0.6 2.2H2.7V4.3H0.6Z" fill="#fff"/><path d="M-4.5 -7.2A8.6 8.6 0 0 1 8.3 -1.2M4.8 7.5A8.6 8.6 0 0 1 -8.3 1.5" fill="none" stroke="#333" stroke-width="0.9"/><path d="M6.4 -1.8L8.3 3.2L10.2 -1.8ZM-6.4 2.1L-8.3 -2.9L-10.2 2.1Z" fill="#333"/></g><path d="M36 32.3H47L41.5 40.5Z" fill="#000"/><path d="M36 80.3H47L41.5 88.5Z" fill="#000"/><path d="M48 80.3H59L53.5 88.5Z" fill="#000"/><path d="M60 80.3H71L65.5 88.5Z" fill="#000"/></svg>
<svg style="left:986px;top:492px" width="46" height="46" viewBox="0 0 46 46"><rect x="13.5" y="1.4" width="17.4" height="14.5" fill="#6fc0dc" stroke="#2a8fc0" stroke-width="1.1"/><g fill="#2a7f9f"><circle cx="17" cy="4" r=".45"/><circle cx="25" cy="6" r=".45"/><circle cx="20" cy="11" r=".45"/></g><path d="M22.4 20V27" stroke="#000" stroke-width="1.2"/><path d="M18.8 23.2H26L22.4 29.7Z" fill="#000"/><defs><pattern id="h2" patternUnits="userSpaceOnUse" width="7.2" height="7.2"><rect width="7.2" height="7.2" fill="#d0d0d0"/><path d="M-1 8.2L8.2 -1M-4 4.6L4.6 -4M3.6 11.8L11.8 3.6" stroke="#555" stroke-width="0.9"/></pattern></defs><rect x="1.7" y="31.5" width="42.4" height="13.3" fill="url(#h2)" stroke="#666" stroke-width="1"/></svg>
<div class="t b" style="top:484.00px;font-size:15px;left:1048.00px;">Xn</div>
<div class="t b" style="top:484.00px;font-size:15px;left:954.80px;width:200px;text-align:right;letter-spacing:0.5px;">70.0000</div>
<div class="t" style="top:532.00px;font-size:15px;left:1048.00px;color:#111;">Z</div>
<div class="t" style="top:532.00px;font-size:15px;left:954.30px;width:200px;text-align:right;color:#111;">-77.5000</div>
<svg style="left:1160px;top:503px" width="16" height="24" viewBox="0 0 16 24"><path d="M12 3.5L4.5 12.2L12 20.9" fill="none" stroke="#2b8cb5" stroke-width="3"/></svg>
<div class="t b" style="top:616.00px;font-size:17px;left:550.40px;">2</div>
<svg style="left:634px;top:641px" width="44" height="28" viewBox="0 0 44 28"><rect x="1.2" y="1.2" width="25.7" height="25.6" fill="#6fc0dc" stroke="#3b9cc4" stroke-width="1"/><g fill="#2a7f9f"><circle cx="10" cy="4" r=".45"/><circle cx="6" cy="22" r=".45"/><circle cx="22" cy="17" r=".45"/></g><path d="M1.2 14.9H4.1V23.8H12.9V26.8H1.2Z" fill="#000"/><rect x="26.9" y="10.2" width="5.9" height="7.2" fill="#555"/><path d="M32.8 10.6H42.2M32.8 17H42.2" stroke="#444" stroke-width="1"/></svg>
<div class="t" style="top:648.00px;font-size:16px;left:633.00px;width:30px;text-align:center;color:#111;letter-spacing:-0.4px;">T2</div>
<svg style="left:721px;top:607px" width="241" height="97" viewBox="0 0 241 97"><rect x="0.5" y="0.5" width="239" height="95" fill="#fff" stroke="#5cb8dc" stroke-width="1"/><path d="M0.5 23.5H239.5" stroke="#5cb8dc" stroke-width="1"/><path d="M0.5 47.5H239.5" stroke="#5cb8dc" stroke-width="1"/><path d="M0.5 71.5H239.5" stroke="#5cb8dc" stroke-width="1"/><g transform="translate(24.7,12)"><rect x="-3.6" y="-5.7" width="7.5" height="11.3" rx="0.6" fill="#000"/><rect x="-2.4" y="-4.6" width="5.1" height="2.4" fill="#fff"/><path d="M-2.4 -1.2H-0.3V0.9H-2.4ZM0.6 -1.2H2.7V0.9H0.6ZM-2.4 2.2H-0.3V4.3H-2.4ZM0.6 2.2H2.7V4.3H0.6Z" fill="#fff"/><path d="M-4.5 -7.2A8.6 8.6 0 0 1 8.3 -1.2M4.8 7.5A8.6 8.6 0 0 1 -8.3 1.5" fill="none" stroke="#333" stroke-width="0.9"/><path d="M6.4 -1.8L8.3 3.2L10.2 -1.8ZM-6.4 2.1L-8.3 -2.9L-10.2 2.1Z" fill="#333"/></g><path d="M36 32.3H47L41.5 40.5Z" fill="#000"/><path d="M36 80.3H47L41.5 88.5Z" fill="#000"/><path d="M48 80.3H59L53.5 88.5Z" fill="#000"/><path d="M60 80.3H71L65.5 88.5Z" fill="#000"/><g fill="none" stroke="#333" stroke-width="0.9"><path d="M109 32.2A3.5 3.5 0 0 1 109 38.2"/><path d="M110.8 30A6.5 6.5 0 0 1 110.8 40.4"/><path d="M112.8 27.5A9.5 9.5 0 0 1 112.8 42.9"/></g></svg>
<svg style="left:986px;top:632px" width="46" height="46" viewBox="0 0 46 46"><rect x="13.5" y="1.4" width="17.4" height="14.5" fill="#6fc0dc" stroke="#2a8fc0" stroke-width="1.1"/><g fill="#2a7f9f"><circle cx="17" cy="4" r=".45"/><circle cx="25" cy="6" r=".45"/><circle cx="20" cy="11" r=".45"/></g><path d="M22.4 20V27" stroke="#000" stroke-width="1.2"/><path d="M18.8 23.2H26L22.4 29.7Z" fill="#000"/><defs><pattern id="h2" patternUnits="userSpaceOnUse" width="7.2" height="7.2"><rect width="7.2" height="7.2" fill="#d0d0d0"/><path d="M-1 8.2L8.2 -1M-4 4.6L4.6 -4M3.6 11.8L11.8 3.6" stroke="#555" stroke-width="0.9"/></pattern></defs><rect x="1.7" y="31.5" width="42.4" height="13.3" fill="url(#h2)" stroke="#666" stroke-width="1"/></svg>
<div class="t b" style="top:624.00px;font-size:15px;left:1048.00px;">Xn</div>
<div class="t b" style="top:624.00px;font-size:15px;left:954.80px;width:200px;text-align:right;letter-spacing:0.5px;">32.0000</div>
<div class="t" style="top:672.00px;font-size:15px;left:1048.00px;color:#111;">Z</div>
<div class="t" style="top:672.00px;font-size:15px;left:954.30px;width:200px;text-align:right;color:#111;">-17.7500</div>
<svg style="left:1160px;top:643px" width="16" height="24" viewBox="0 0 16 24"><path d="M12 3.5L4.5 12.2L12 20.9" fill="none" stroke="#2b8cb5" stroke-width="3"/></svg>
<div class="t b" style="top:756.00px;font-size:17px;left:550.40px;">3</div>
<svg style="left:634px;top:781px" width="44" height="28" viewBox="0 0 44 28"><rect x="1.2" y="1.2" width="25.7" height="25.6" fill="#6fc0dc" stroke="#3b9cc4" stroke-width="1"/><g fill="#2a7f9f"><circle cx="10" cy="4" r=".45"/><circle cx="6" cy="22" r=".45"/><circle cx="22" cy="17" r=".45"/></g><path d="M1.2 14.9H4.1V23.8H12.9V26.8H1.2Z" fill="#000"/><rect x="26.9" y="10.2" width="5.9" height="7.2" fill="#555"/><path d="M32.8 10.6H42.2M32.8 17H42.2" stroke="#444" stroke-width="1"/></svg>
<div class="t" style="top:788.00px;font-size:16px;left:633.00px;width:30px;text-align:center;color:#111;letter-spacing:-0.4px;">T2</div>
<svg style="left:721px;top:747px" width="241" height="97" viewBox="0 0 241 97"><rect x="0.5" y="0.5" width="239" height="95" fill="#fff" stroke="#5cb8dc" stroke-width="1"/><path d="M0.5 23.5H239.5" stroke="#5cb8dc" stroke-width="1"/><path d="M0.5 47.5H239.5" stroke="#5cb8dc" stroke-width="1"/><path d="M0.5 71.5H239.5" stroke="#5cb8dc" stroke-width="1"/><g transform="translate(24.7,12)"><rect x="-3.6" y="-5.7" width="7.5" height="11.3" rx="0.6" fill="#000"/><rect x="-2.4" y="-4.6" width="5.1" height="2.4" fill="#fff"/><path d="M-2.4 -1.2H-0.3V0.9H-2.4ZM0.6 -1.2H2.7V0.9H0.6ZM-2.4 2.2H-0.3V4.3H-2.4ZM0.6 2.2H2.7V4.3H0.6Z" fill="#fff"/><path d="M-4.5 -7.2A8.6 8.6 0 0 1 8.3 -1.2M4.8 7.5A8.6 8.6 0 0 1 -8.3 1.5" fill="none" stroke="#333" stroke-width="0.9"/><path d="M6.4 -1.8L8.3 3.2L10.2 -1.8ZM-6.4 2.1L-8.3 -2.9L-10.2 2.1Z" fill="#333"/></g><path d="M36 32.3H47L41.5 40.5Z" fill="#000"/><path d="M36 80.3H47L41.5 88.5Z" fill="#000"/><path d="M48 80.3H59L53.5 88.5Z" fill="#000"/><path d="M60 80.3H71L65.5 88.5Z" fill="#000"/><g fill="none" stroke="#333" stroke-width="0.9"><path d="M109 32.2A3.5 3.5 0 0 1 109 38.2"/><path d="M110.8 30A6.5 6.5 0 0 1 110.8 40.4"/><path d="M112.8 27.5A9.5 9.5 0 0 1 112.8 42.9"/></g></svg>
<svg style="left:986px;top:772px" width="46" height="46" viewBox="0 0 46 46"><rect x="13.5" y="1.4" width="17.4" height="14.5" fill="#6fc0dc" stroke="#2a8fc0" stroke-width="1.1"/><g fill="#2a7f9f"><circle cx="17" cy="4" r=".45"/><circle cx="25" cy="6" r=".45"/><circle cx="20" cy="11" r=".45"/></g><path d="M22.4 20V27" stroke="#000" stroke-width="1.2"/><path d="M18.8 23.2H26L22.4 29.7Z" fill="#000"/><defs><pattern id="h2" patternUnits="userSpaceOnUse" width="7.2" height="7.2"><rect width="7.2" height="7.2" fill="#d0d0d0"/><path d="M-1 8.2L8.2 -1M-4 4.6L4.6 -4M3.6 11.8L11.8 3.6" stroke="#555" stroke-width="0.9"/></pattern></defs><rect x="1.7" y="31.5" width="42.4" height="13.3" fill="url(#h2)" stroke="#666" stroke-width="1"/></svg>
<div class="t b" style="top:764.00px;font-size:15px;left:1048.00px;">Xn</div>
<div class="t b" style="top:764.00px;font-size:15px;left:954.80px;width:200px;text-align:right;letter-spacing:0.5px;">25.0000</div>
<div class="t" style="top:812.00px;font-size:15px;left:1048.00px;color:#111;">Z</div>
<div class="t" style="top:812.00px;font-size:15px;left:954.30px;width:200px;text-align:right;color:#111;">-59.5000</div>
<svg style="left:1160px;top:783px" width="16" height="24" viewBox="0 0 16 24"><path d="M12 3.5L4.5 12.2L12 20.9" fill="none" stroke="#2b8cb5" stroke-width="3"/></svg>
<div class="a" style="left:500px;top:80px;width:1px;height:920px;background:#213c47;"></div>
<div class="a" style="left:1199px;top:80px;width:1px;height:920px;background:#213c47;"></div>
<svg style="left:0;top:0" width="1280" height="1024" viewBox="0 0 1280 1024"><circle cx="1240.1" cy="109.9" r="26.3" fill="#fff" stroke="#d6d6d6" stroke-width="1"/><path d="M1239.8 128.4A18.6 18.6 0 1 1 1258.3 107.5" fill="none" stroke="#111" stroke-width="1.3"/><path d="M1254.2 108.7H1263L1258.6 114Z M1254.8 112.2H1262.4L1258.6 117.6Z" fill="#000"/><rect x="1231.3" y="98.5" width="17.5" height="14" fill="#6fc0dc" stroke="#3b9cc4" stroke-width="0.9"/><g fill="#2a7f9f"><circle cx="1236.5" cy="101" r=".4"/><circle cx="1243.5" cy="101" r=".4"/><circle cx="1240.5" cy="104.5" r=".4"/><circle cx="1236.5" cy="108.5" r=".4"/><circle cx="1243.5" cy="108.5" r=".4"/></g><path d="M1228.6 121.6V117H1251.2V121.6" fill="none" stroke="#666" stroke-width="1.1"/><rect x="1202.8" y="143.3" width="74.4" height="53.3" rx="8" fill="#fff" stroke="#ececec" stroke-width="1"/><circle cx="1269.5" cy="151.3" r="7.2" fill="none" stroke="#e4ecca" stroke-width="1.1"/><path d="M1269.5 146.9V155.70000000000002" stroke="#dfe8c0" stroke-width="1"/><rect x="1202.8" y="203.3" width="74.4" height="53.3" rx="8" fill="#fff" stroke="#ececec" stroke-width="1"/><circle cx="1269.5" cy="211.3" r="7.2" fill="none" stroke="#e4ecca" stroke-width="1.1"/><path d="M1269.5 206.9V215.70000000000002" stroke="#dfe8c0" stroke-width="1"/><rect x="1202.8" y="263.3" width="74.4" height="53.3" rx="8" fill="#fff" stroke="#ececec" stroke-width="1"/><circle cx="1269.5" cy="271.3" r="7.2" fill="none" stroke="#e4ecca" stroke-width="1.1"/><path d="M1269.5 266.90000000000003V275.7" stroke="#dfe8c0" stroke-width="1"/><rect x="1202.8" y="323.3" width="74.4" height="53.3" rx="8" fill="#fff" stroke="#ececec" stroke-width="1"/><circle cx="1269.5" cy="331.3" r="7.2" fill="none" stroke="#e4ecca" stroke-width="1.1"/><path d="M1269.5 326.90000000000003V335.7" stroke="#dfe8c0" stroke-width="1"/><rect x="1202.8" y="383.3" width="74.4" height="53.3" rx="8" fill="#fff" stroke="#ececec" stroke-width="1"/><circle cx="1269.5" cy="391.3" r="7.2" fill="none" stroke="#e4ecca" stroke-width="1.1"/><path d="M1269.5 386.90000000000003V395.7" stroke="#dfe8c0" stroke-width="1"/><g transform="translate(0,0)" fill="#f8f7dc" stroke="#b9b9b9" stroke-width="1"><path d="M1218.2 166.6H1225.5L1228.5 162.2H1244.8V168.4H1218.2Z"/><rect x="1231.3" y="168.4" width="8" height="24"/><path d="M1218.2 179.8H1234.3V192.2H1228.8V184.5L1225.5 182.5H1218.2Z"/><rect x="1240.2" y="179.8" width="4.7" height="12.4"/><path d="M1235.5 172.5H1238.5M1235.5 175H1238.5M1235.5 177.5H1238.5M1235.5 180H1238.5M1235.5 182.5H1238.5M1235.5 185H1238.5M1235.5 187.5H1238.5M1235.5 190H1238.5" fill="none" stroke="#aaa" stroke-width="0.8"/></g><g transform="translate(0,60)" fill="#f8f7dc" stroke="#b9b9b9" stroke-width="1"><path d="M1218.2 166.6H1225.5L1228.5 162.2H1244.8V168.4H1218.2Z"/><rect x="1231.3" y="168.4" width="8" height="24"/><path d="M1218.2 179.8H1234.3V192.2H1228.8V184.5L1225.5 182.5H1218.2Z"/><rect x="1240.2" y="179.8" width="4.7" height="12.4"/><path d="M1235.5 172.5H1238.5M1235.5 175H1238.5M1235.5 177.5H1238.5M1235.5 180H1238.5M1235.5 182.5H1238.5M1235.5 185H1238.5M1235.5 187.5H1238.5M1235.5 190H1238.5" fill="none" stroke="#aaa" stroke-width="0.8"/></g><circle cx="1247.5" cy="228.1" r="10" fill="#fff" stroke="#b0b0b0" stroke-width="1.1"/><path d="M1247.5 221.5V228.1H1253" fill="none" stroke="#aaa" stroke-width="1"/><g fill="#e8e8e8" stroke="#d2d2d2" stroke-width="1"><rect x="1220.2" y="298.2" width="28.8" height="11.7"/><rect x="1225.2" y="291.2" width="18.8" height="7"/></g><rect x="1228.1" y="288.1" width="12.9" height="3.1" fill="#c9dce6"/><path d="M1234.1 329.4H1236.9V341.7H1242.2L1235.5 352.8L1228.7 341.7H1234.1Z" fill="#ababab"/><rect x="1213.1" y="354.2" width="42.6" height="12.4" fill="#f1f1f1" stroke="#d0d0d0" stroke-width="1"/><path d="M1217 354.5L1225 366.3M1225 354.5L1233 366.3M1233 354.5L1241 366.3M1241 354.5L1249 366.3M1249 354.5L1255.5 364" stroke="#cfcfcf" stroke-width="0.9"/><g fill="none" stroke="#f7b3b3" stroke-width="1.1"><path d="M1216 408.5A18 18 0 0 1 1224 397.5"/><path d="M1220.5 411A13 13 0 0 1 1226.5 402"/><path d="M1224.8 413A8.5 8.5 0 0 1 1229 406.5"/><path d="M1229 415A4 4 0 0 1 1231 412"/></g><rect x="1235.2" y="397.9" width="17.5" height="14.7" fill="#d5eaf2" stroke="#c4dde8" stroke-width="0.8"/><rect x="1235.2" y="412.6" width="17.5" height="4.7" fill="#f9d3d3"/><g fill="#efefef" stroke="#bdbdbd" stroke-width="1"><rect x="1219.9" y="417.3" width="34" height="12.3"/><rect x="1253.9" y="419.4" width="5.9" height="7.8"/><rect x="1225.2" y="414.3" width="8.6" height="18.2"/></g><path d="M1218 423.5H1262" stroke="#c0c0c0" stroke-width="0.8" stroke-dasharray="4 2"/></svg>
<div class="t" style="top:359.00px;font-size:14px;left:1214.50px;width:40px;text-align:center;color:#b3b3b3;letter-spacing:-0.3px;">END</div>
<svg style="left:0;top:0" width="1280" height="1024" viewBox="0 0 1280 1024"><circle cx="1240" cy="529.8" r="26.5" fill="#fff" stroke="#d6d6d6" stroke-width="1"/><g fill="none" stroke="#3b7e95" stroke-width="1.1"><rect x="1232.6" y="515.6" width="14.7" height="31.6"/><path d="M1232.6 519.55H1247.3"/><path d="M1232.6 523.50H1247.3"/><path d="M1232.6 527.45H1247.3"/><path d="M1232.6 531.40H1247.3"/><path d="M1232.6 535.35H1247.3"/><path d="M1232.6 539.30H1247.3"/><path d="M1232.6 543.25H1247.3"/></g><rect x="1232.6" y="531.4" width="14.7" height="3.9" fill="none" stroke="#000" stroke-width="1.4"/><path d="M1223.3 524.5C1224 513 1229 510.3 1233.7 510.3C1239 510.3 1244.5 515 1244.6 526" fill="none" stroke="#000" stroke-width="2.4"/><path d="M1240.2 525.2H1249L1244.6 530Z M1241.2 527.8H1248L1244.6 532.5Z" fill="#000"/><circle cx="1240" cy="650" r="26.5" fill="#fff" stroke="#d6d6d6" stroke-width="1"/><path d="M1225.5 654.5V634.5A3.4 3.4 0 0 1 1232.4 634.5V654.5A5.6 5.6 0 1 1 1225.5 654.5Z" fill="#fff" stroke="#222" stroke-width="1"/><path d="M1226 641.3H1231.9V655A5 5 0 1 1 1226 655Z" fill="#ef5350"/><path d="M1230 636H1232M1230 639H1232M1230 642H1232M1230 645H1232M1230 648H1232M1230 651H1232" stroke="#222" stroke-width="0.7"/><path d="M1237.6 652.4V666.9H1252.1M1240.6 649.4H1255.1V663.9" fill="none" stroke="#000" stroke-width="1.3"/><path d="M1235.1 654.4L1237.6 649.4L1240.1 654.4Z M1250.1 646.9L1255.1 649.4L1250.1 651.9Z M1257.6 661.9L1255.1 666.9L1252.6 661.9Z M1242.6 669.4L1237.6 666.9L1242.6 664.4Z" fill="#000"/><path d="M1244.55 654.9H1248.1499999999999M1246.35 654.9V661.4M1244.55 661.4H1248.1499999999999" stroke="#333" stroke-width="1.1"/><circle cx="1259.9" cy="668.7" r="7.5" fill="#e9e9e9"/><circle cx="1240" cy="710.2" r="26.5" fill="#fff" stroke="#d6d6d6" stroke-width="1"/><circle cx="1234.3" cy="704.1" r="14" fill="none" stroke="#222" stroke-width="1.1"/><path d="M1234.3 690.1V692.3M1234.3 716V718.1M1220.3 704.1H1222.5M1246.2 704.1H1248.3" stroke="#222" stroke-width="1"/><path d="M1229.4 695L1234.3 704.1H1244.7" fill="none" stroke="#3aa0cc" stroke-width="1.2"/><path d="M1238.6 711.4V725.4H1252.6M1241.6 708.4H1255.6V722.4" fill="none" stroke="#000" stroke-width="1.3"/><path d="M1236.1 713.4L1238.6 708.4L1241.1 713.4Z M1250.6 705.9L1255.6 708.4L1250.6 710.9Z M1258.1 720.4L1255.6 725.4L1253.1 720.4Z M1243.6 727.9L1238.6 725.4L1243.6 722.9Z" fill="#000"/><path d="M1245.3 713.9H1248.8999999999999M1247.1 713.9V720.4M1245.3 720.4H1248.8999999999999" stroke="#333" stroke-width="1.1"/><circle cx="1240" cy="850" r="26.8" fill="#cacaca"/><path d="M1235.5 857.5C1235.5 851 1229.6 849 1229.6 843A10.3 8.2 0 0 1 1250.2 843C1250.2 849 1244.5 851 1244.5 857.5Z" fill="none" stroke="#000" stroke-width="1.6"/><path d="M1234.8 858.3H1245.6V863A3.5 3.5 0 0 1 1242 866.5H1238.3A3.5 3.5 0 0 1 1234.8 863Z" fill="#000"/><circle cx="1240" cy="909.9" r="26.5" fill="#fff" stroke="#d0d0d0" stroke-width="1"/><path d="M1237.4 914.2V897A1.8 1.8 0 0 1 1241 897V905.5C1244 905 1248 906.5 1250 909C1251 912 1249.5 916 1248.5 919.2H1238.5C1236.5 917 1233 915.5 1229.5 912.5C1228 911.5 1228.5 909.5 1231 909.7Z" fill="#fff" stroke="#000" stroke-width="1.6" stroke-linejoin="round"/><rect x="1235.4" y="920.7" width="14.8" height="6" fill="#000"/><circle cx="1240" cy="970" r="26.5" fill="#fff" stroke="#d0d0d0" stroke-width="1"/><path d="M1223 970.5L1240 955L1257 970.5" fill="none" stroke="#000" stroke-width="2.8"/><path d="M1227 969V986.6H1240.2V974H1247.8V986.6H1252.9V969L1240 957.5Z" fill="#000"/><rect x="1229.4" y="974" width="8.1" height="5" fill="#fff"/></svg>
</body></html>
